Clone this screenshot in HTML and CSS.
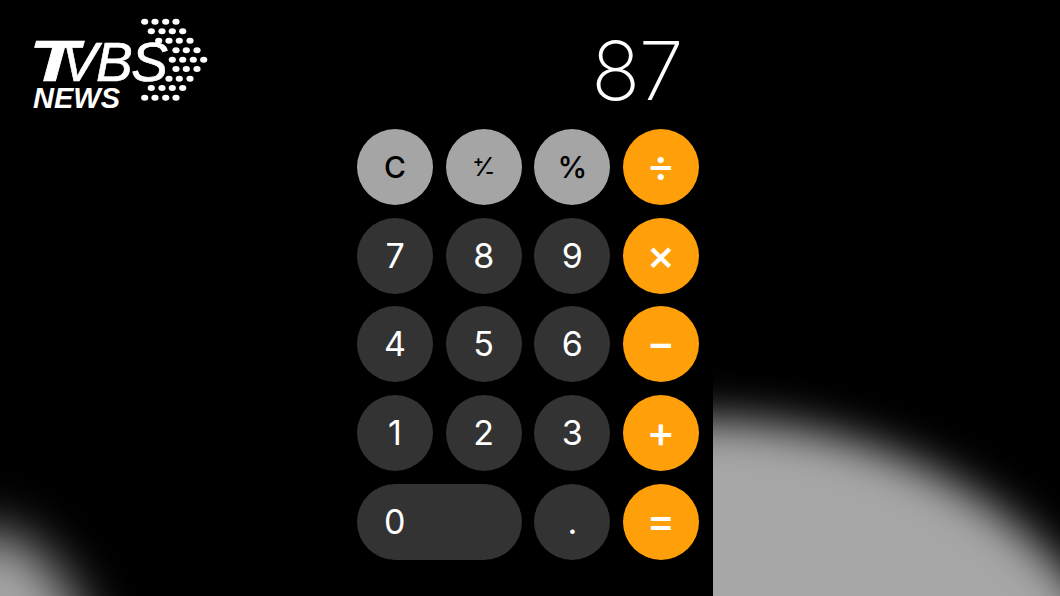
FILE: index.html
```html
<!DOCTYPE html>
<html lang="zh-Hant">
<head>
    <meta charset="UTF-8">
    <meta name="viewport" content="width=device-width, initial-scale=1.0">
    <title>TVBS NEWS - Calculator</title>
    <link rel="stylesheet" href="styles.css">
</head>
<body>
    <div class="backdrop">
        <div class="glow glow-left"></div>
        <div class="glow-clip">
            <div class="glow glow-right"></div>
        </div>
    </div>

    <div class="logo">
        <svg class="logo-dots" width="210" height="110" viewBox="0 0 210 110" aria-hidden="true">
            <g fill="#fff">
                <ellipse cx="144.7" cy="21.7" rx="3.6" ry="3"/><ellipse cx="155" cy="21.7" rx="3.6" ry="3"/><ellipse cx="165.7" cy="21.7" rx="3.6" ry="3"/><ellipse cx="176" cy="21.7" rx="3.6" ry="3"/>
                <ellipse cx="151.3" cy="31.3" rx="3.6" ry="3"/><ellipse cx="162" cy="31.3" rx="3.6" ry="3"/><ellipse cx="172.3" cy="31.3" rx="3.6" ry="3"/><ellipse cx="182.7" cy="31.3" rx="3.6" ry="3"/>
                <ellipse cx="158.7" cy="40.7" rx="3.6" ry="3"/><ellipse cx="169" cy="40.7" rx="3.6" ry="3"/><ellipse cx="179.3" cy="40.7" rx="3.6" ry="3"/><ellipse cx="190" cy="40.7" rx="3.6" ry="3"/>
                <ellipse cx="176" cy="50.3" rx="3.6" ry="3"/><ellipse cx="186.3" cy="50.3" rx="3.6" ry="3"/><ellipse cx="197" cy="50.3" rx="3.6" ry="3"/>
                <ellipse cx="172.3" cy="59.7" rx="3.6" ry="3"/><ellipse cx="182.7" cy="59.7" rx="3.6" ry="3"/><ellipse cx="193.3" cy="59.7" rx="3.6" ry="3"/><ellipse cx="203.7" cy="59.7" rx="3.6" ry="3"/>
                <ellipse cx="176" cy="69" rx="3.6" ry="3"/><ellipse cx="186.3" cy="69" rx="3.6" ry="3"/><ellipse cx="197" cy="69" rx="3.6" ry="3"/>
                <ellipse cx="169" cy="78.7" rx="3.6" ry="3"/><ellipse cx="179.3" cy="78.7" rx="3.6" ry="3"/><ellipse cx="190" cy="78.7" rx="3.6" ry="3"/>
                <ellipse cx="151.3" cy="88" rx="3.6" ry="3"/><ellipse cx="162" cy="88" rx="3.6" ry="3"/><ellipse cx="172.3" cy="88" rx="3.6" ry="3"/><ellipse cx="182.7" cy="88" rx="3.6" ry="3"/>
                <ellipse cx="144.7" cy="97.7" rx="3.6" ry="3"/><ellipse cx="155" cy="97.7" rx="3.6" ry="3"/><ellipse cx="165.7" cy="97.7" rx="3.6" ry="3"/><ellipse cx="176" cy="97.7" rx="3.6" ry="3"/>
            </g>
        </svg>
        <div class="logo-tvbs"><span class="logo-t">T</span>VBS</div>
        <div class="logo-news">NEWS</div>
    </div>

    <div class="calc">
        <div class="calc-display">87</div>
        <div class="calc-grid">
            <div class="key key-light">C</div>
            <div class="key key-light key-sign"><span class="sign-plus">+</span><span class="sign-slash">⁄</span><span class="sign-minus">-</span></div>
            <div class="key key-light">%</div>
            <div class="key key-op">÷</div>

            <div class="key">7</div>
            <div class="key">8</div>
            <div class="key">9</div>
            <div class="key key-op">×</div>

            <div class="key">4</div>
            <div class="key">5</div>
            <div class="key">6</div>
            <div class="key key-op">−</div>

            <div class="key">1</div>
            <div class="key">2</div>
            <div class="key">3</div>
            <div class="key key-op">+</div>

            <div class="key key-zero">0</div>
            <div class="key">.</div>
            <div class="key key-op">=</div>
        </div>
    </div>
</body>
</html>
```

FILE: styles.css
```css
* { margin: 0; padding: 0; box-sizing: border-box; }
html, body { height: 100%; }
body { background: #000; color: #fff; font-family: Inter, 'Liberation Sans', sans-serif; position: relative; overflow: hidden; }

/* blurred shapes behind the calculator */
.backdrop { position: absolute; inset: 0; overflow: hidden; }
.glow { position: absolute; background: #a6a6a6; border-radius: 50%; }
.glow-left { left: -42px; top: 522px; width: 125px; height: 220px; transform: rotate(-28deg); filter: blur(26px); }
.glow-clip { position: absolute; left: 713px; top: 0; right: 0; bottom: 0; overflow: hidden; }
.glow-right { left: -448px; top: 420px; width: 880px; height: 720px; filter: blur(22px); }

/* logo */
.logo { position: absolute; left: 0; top: 0; width: 210px; height: 110px; font-family: 'Liberation Sans', Arial, sans-serif; font-weight: 700; font-style: italic; color: #fff; }
.logo-dots { position: absolute; left: 0; top: 0; }
.logo-tvbs { position: absolute; left: 29px; top: 38px; font-size: 55px; line-height: 46px; font-weight: 400; letter-spacing: -1.5px; -webkit-text-stroke: 0.7px #fff; }
.logo-t { display: inline-block; font-size: 58px; font-weight: 700; transform: scaleX(1.4); transform-origin: left center; margin-right: -2px; }
.logo-news { position: absolute; left: 33px; top: 86px; font-size: 29px; line-height: 25px; }

/* calculator */
.calc { position: relative; width: 342px; margin-left: 357px; }
.calc-display { height: 129px; padding: 26px 17px 0 0; text-align: right; font-size: 81px; line-height: 90px; font-weight: 200; letter-spacing: -1.5px; }
.calc-grid { display: grid; grid-template-columns: repeat(4, 76px); grid-auto-rows: 76px; gap: 12.67px; }
.key { display: flex; align-items: center; justify-content: center; padding-bottom: 1px; border-radius: 38px; background: #333; color: #fff; font-size: 34px; }
.key-light { background: #a5a5a5; color: #000; font-size: 30px; font-weight: 450; }
.key-op { background: #ff9f0a; font-size: 43px; font-weight: 500; padding-bottom: 4px; }
.key-zero { grid-column: span 2; justify-content: flex-start; padding-left: 27px; }

/* the +/- key has its own small glyphs */
.key-sign { font-size: 26px; }
.sign-plus { font-size: 16px; font-weight: 600; margin-bottom: 11px; }
.sign-slash { margin: 0 -2px; }
.sign-minus { font-size: 20px; margin-top: 10px; }
```
